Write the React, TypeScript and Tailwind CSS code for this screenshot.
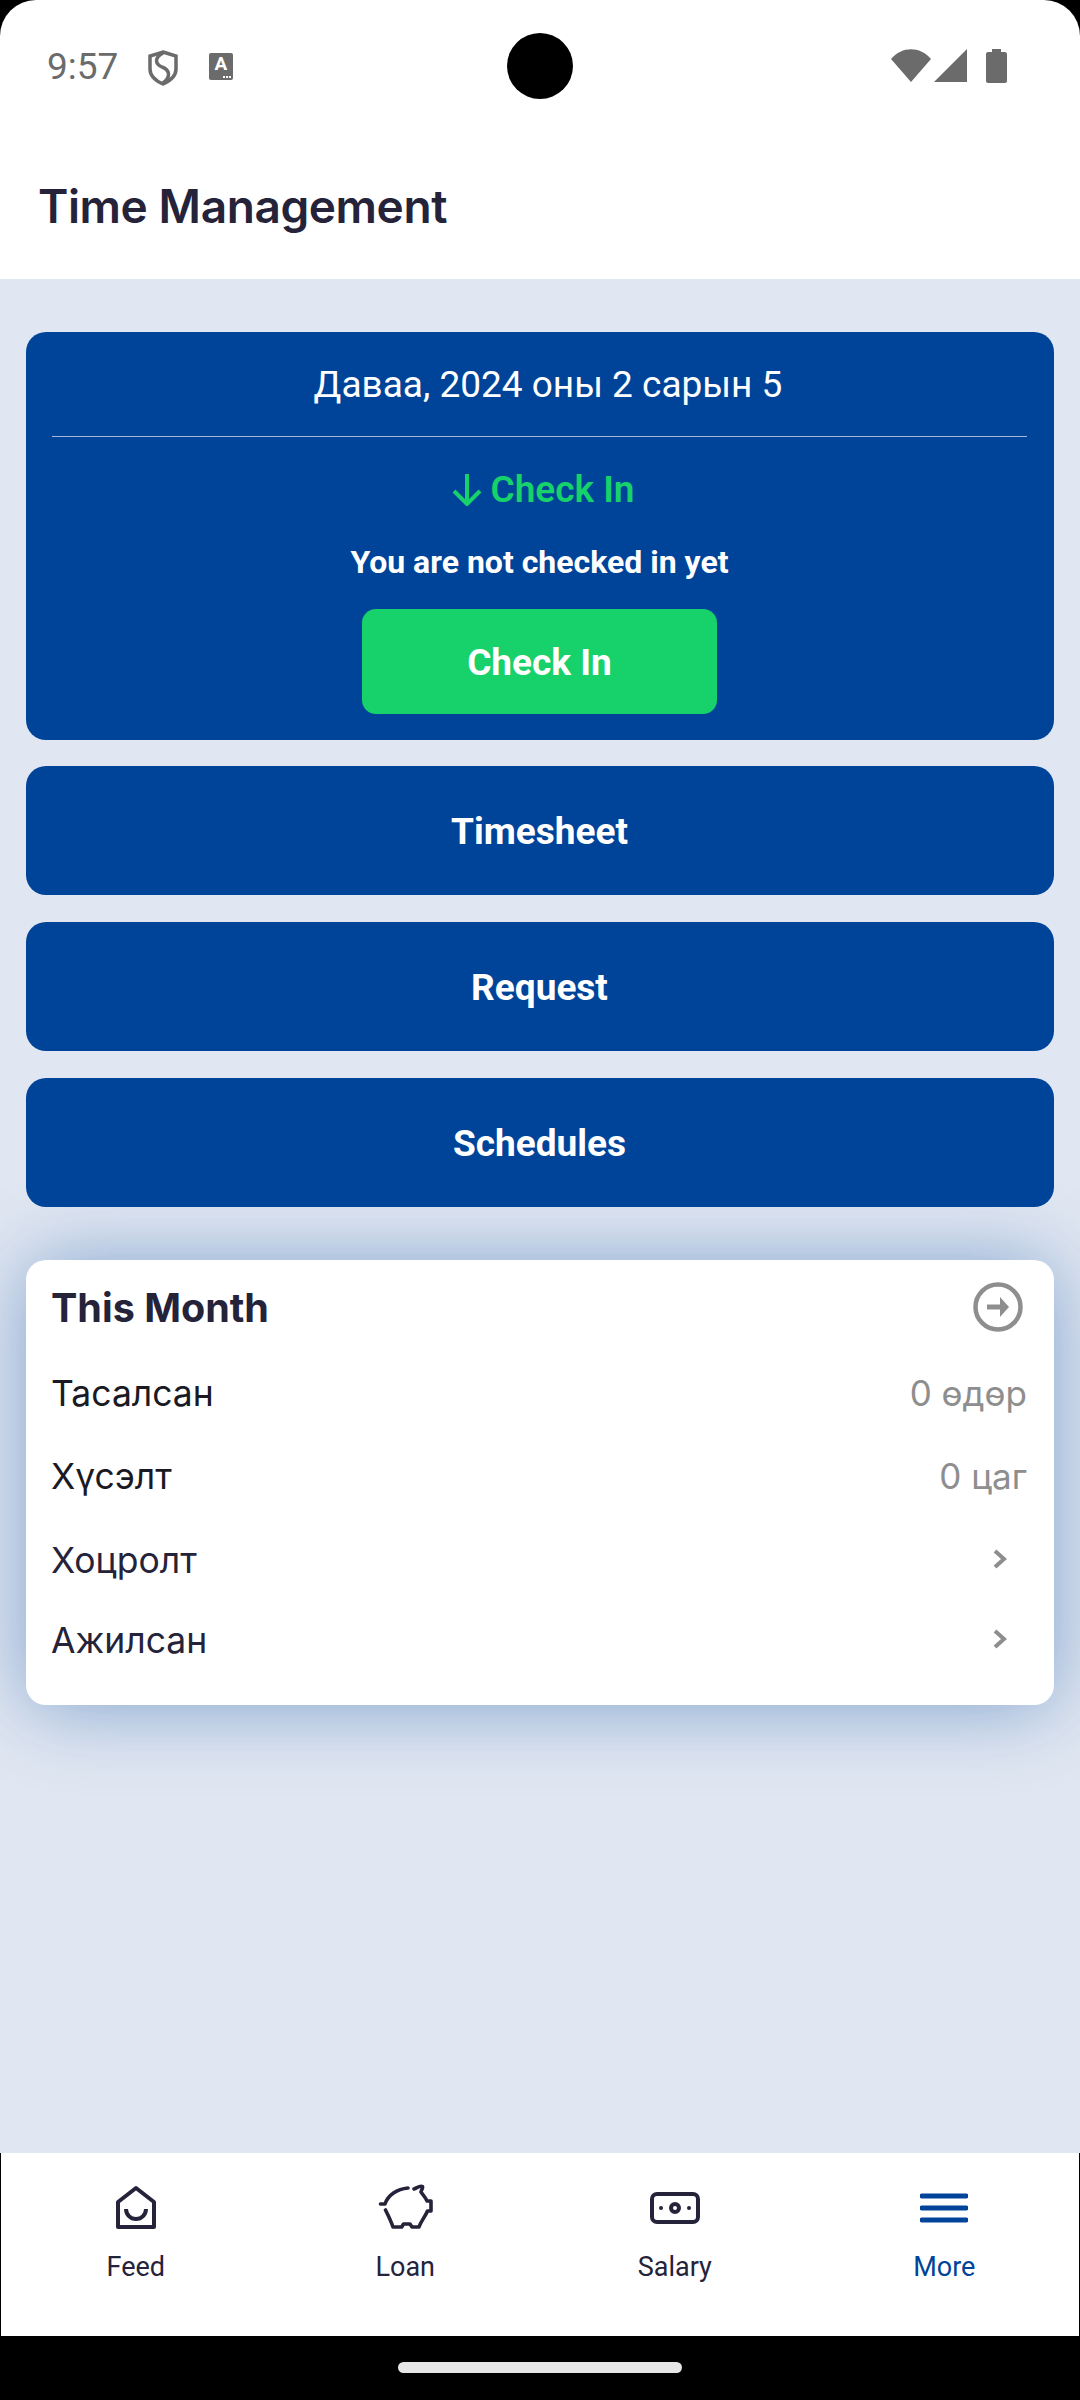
const inter = "font-['Inter',sans-serif]";

function HomeIcon() {
  return (
    <svg width="44" height="46" viewBox="0 0 44 46" fill="none" stroke="#25233a" strokeWidth="4" strokeLinejoin="round">
      <path d="M22 3 L40 17 V42 H4 V17 Z" />
      <path d="M12 24 A10 10 0 0 0 32 24" />
    </svg>
  );
}

function PiggyIcon() {
  return (
    <svg width="56" height="48" viewBox="0 0 56 48" fill="none" stroke="#25233a" strokeWidth="3.6" strokeLinejoin="round" strokeLinecap="round">
      <path d="M3.5 20 H8 C11 11 20 5 31 4" />
      <path d="M37 5 C40 4 43 1 45.5 2.5 C46 5 44 6 44 8 C46 11 49 14 50 17 H54 V27 H50.5 C48 33 44 37 42 43 H35 L33 40 H26.5 L24.7 43 H16 C14 37 11 31 8.5 26" />
    </svg>
  );
}

function SalaryIcon() {
  return (
    <svg width="50" height="32" viewBox="0 0 50 32" fill="none" stroke="#25233a">
      <rect x="2" y="2" width="46" height="28" rx="5" strokeWidth="4" />
      <circle cx="25" cy="16" r="4" strokeWidth="4" />
      <circle cx="11" cy="16" r="2" fill="#25233a" stroke="none" />
      <circle cx="39" cy="16" r="2" fill="#25233a" stroke="none" />
    </svg>
  );
}

function MenuIcon() {
  return (
    <svg width="48" height="30" viewBox="0 0 48 30" fill="none" stroke="#00449a" strokeWidth="5" strokeLinecap="round">
      <path d="M2 3 H46" />
      <path d="M2 15 H46" />
      <path d="M2 27 H46" />
    </svg>
  );
}

function Chevron() {
  return (
    <svg width="14" height="20" viewBox="0 0 14 20" fill="none" stroke="#8e8e8e" strokeWidth="4">
      <path d="M2 2 L11 10 L2 18" />
    </svg>
  );
}

function StatusBar() {
  return (
    <div className="relative h-[132px] pt-[49px] pl-[47px] pr-[73px] flex items-start">
      <span className="font-['Roboto',sans-serif] text-[37px] leading-[36px] text-[#6b6b6b] w-[101px]">9:57</span>
      <svg width="30" height="36" viewBox="0 0 30 36" fill="none" stroke="#6b6b6b" strokeWidth="3.5" className="mt-[1px]">
        <path d="M15 2 L28 6 V19 C28 26 22 31 15 34 C8 31 2 26 2 19 V6 Z" />
        <path d="M15 3 C6 8 7 14 14 17 C22 20 23 27 15 33" />
      </svg>
      <div className="relative ml-[31px] mt-[4px] w-[24px] h-[27px] rounded-[2px] bg-[#6b6b6b] text-center text-white font-['Roboto',sans-serif] font-bold text-[19px] leading-[22px]">
        A
        <div className="absolute right-[2px] bottom-[2px] flex gap-[1px]">
          <div className="w-[2px] h-[2px] bg-white" />
          <div className="w-[2px] h-[2px] bg-white" />
          <div className="w-[2px] h-[2px] bg-white" />
        </div>
      </div>
      {/* camera cutout */}
      <div className="absolute left-[507px] top-[33px] w-[66px] h-[66px] rounded-full bg-black" />
      <div className="ml-auto flex items-start">
        <svg width="40" height="33" viewBox="0 0 40 33" fill="#6b6b6b">
          <path d="M0 10 C11 -3 29 -3 40 10 L20 33 Z" />
        </svg>
        <svg width="33" height="33" viewBox="0 0 33 33" fill="#6b6b6b" className="ml-[3px]">
          <path d="M33 0 V33 H0 Z" />
        </svg>
        <svg width="21" height="34" viewBox="0 0 21 34" fill="#6b6b6b" className="ml-[19px]">
          <path d="M6 0 H15 V3 H19 C20 3 21 4 21 5 V32 C21 33 20 34 19 34 H2 C1 34 0 33 0 32 V5 C0 4 1 3 2 3 H6 Z" />
        </svg>
      </div>
    </div>
  );
}

function BlueButton({ label }: { label: string }) {
  return (
    <button className="relative h-[129px] w-full pt-[2px] pr-[1px] rounded-[20px] bg-[#00449a] text-white font-['Roboto',sans-serif] font-bold text-[37px]">
      {label}
    </button>
  );
}

function StatRow({ label, value, dark, className }: { label: string; value?: string; dark?: boolean; className: string }) {
  return (
    <div className={`flex items-center justify-between text-[35.5px] ${inter} ${className}`}>
      <span className={dark ? 'text-[#1a1a24]' : 'text-[#25233a]'}>{label}</span>
      {value ? (
        <span className="text-[#8e8e8e] text-[35px]">{value}</span>
      ) : (
        <span className="mr-[20px] mb-[5px] flex"><Chevron /></span>
      )}
    </div>
  );
}

function NavItem({ icon, label, active }: { icon: React.ReactNode; label: string; active?: boolean }) {
  return (
    <div className="flex-1 flex flex-col items-center">
      <div className="h-[50px] flex items-center justify-center">{icon}</div>
      <span className={`mt-[19px] font-['Roboto',sans-serif] text-[27px] leading-[30px] ${active ? 'text-[#00449a]' : 'text-[#25233a]'}`}>
        {label}
      </span>
    </div>
  );
}

export default function App() {
  return (
    <div className="h-[2400px] w-[1080px] bg-black flex flex-col overflow-hidden">
      <header className="bg-white h-[279px] rounded-t-[36px] shrink-0">
        <StatusBar />
        <h1 className={`pl-[38px] mt-[46px] text-[46px] leading-[56px] font-semibold tracking-[-0.4px] text-[#25233a] ${inter}`}>Time Management</h1>
      </header>

      <main className="flex-1 bg-[#e0e7f2] px-[26px] pt-[53px] flex flex-col">
        <section className="relative bg-[#00449a] rounded-[20px] h-[408px] pl-[26px] pr-[27px] font-['Roboto',sans-serif] text-center flex flex-col items-center text-white">
          <div className="h-[105px] w-full border-b border-[#a3b8d6] flex items-center justify-center pl-[17px] pt-[1px] text-[37px]">
            Даваа, 2024 оны 2 сарын 5
          </div>
          <div className="mt-[31px] ml-[7px] flex items-center text-[#17d16a] text-[37px] font-semibold leading-[44px]">
            <svg width="32" height="32" viewBox="0 0 32 32" fill="none" stroke="#17d16a" strokeWidth="4" className="mr-[7px]">
              <path d="M16 0 V30 M3 17 L16 30 L29 17" />
            </svg>
            Check In
          </div>
          <div className="mt-[30px] text-[32px] leading-[40px] font-bold">You are not checked in yet</div>
          <button className="mt-[27px] h-[105px] w-[355px] pt-[3px] rounded-[14px] bg-[#17d16a] text-[37px] font-bold">Check In</button>
        </section>

        <div className="mt-[26px] flex flex-col gap-[27px]">
          <BlueButton label="Timesheet" />
          <BlueButton label="Request" />
          <BlueButton label="Schedules" />
        </div>

        <section className="mt-[53px] bg-white rounded-[20px] h-[445px] pl-[25px] pr-[27px] pt-[20px] shadow-[0_2px_80px_rgba(0,68,155,0.42)]">
          <div className="h-[54px] flex items-center justify-between">
            <span className={`pt-[4px] text-[39.5px] font-bold text-[#25233a] ${inter}`}>This Month</span>
            <svg width="50" height="50" viewBox="0 0 50 50" fill="none" stroke="#8e8e8e" className="mr-[4px]">
              <circle cx="25" cy="25" r="22.5" strokeWidth="4.5" />
              <path d="M14 25 H30" strokeWidth="5" />
              <path d="M27 15 L36 25 L27 35 Z" fill="#8e8e8e" stroke="none" />
            </svg>
          </div>
          <div className="mt-[18px]">
            <StatRow className="h-[83px]" label="Тасалсан" value="0 өдөр" dark />
            <StatRow className="h-[83px]" label="Хүсэлт" value="0 цаг" dark />
            <StatRow className="h-[86px]" label="Хоцролт" />
            <StatRow className="h-[74px]" label="Ажилсан" />
          </div>
        </section>
      </main>

      <nav className="bg-white h-[183px] shrink-0 border-x border-black flex pt-[30px] relative">
        <NavItem icon={<HomeIcon />} label="Feed" />
        <NavItem icon={<PiggyIcon />} label="Loan" />
        <NavItem icon={<SalaryIcon />} label="Salary" />
        <NavItem icon={<MenuIcon />} label="More" active />
      </nav>
      <div className="h-[64px] shrink-0 flex justify-center pt-[26px]">
        <div className="w-[284px] h-[11px] rounded-full bg-[#e6e6e6]" />
      </div>
    </div>
  );
}
